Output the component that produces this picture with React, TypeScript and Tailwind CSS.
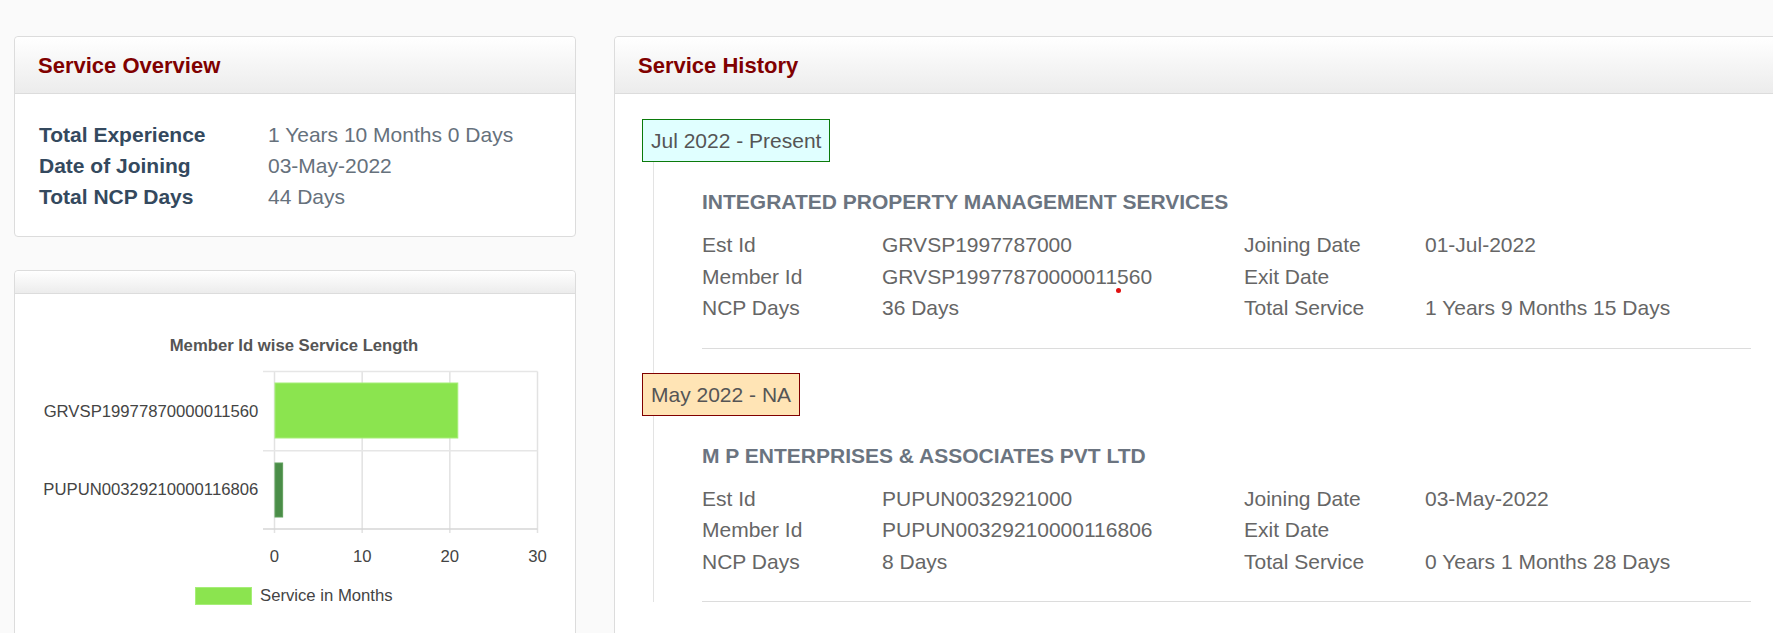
import React from "react"

type Detail = { label: string; value: string }

type HistoryItem = {
  period: string
  tone: "current" | "past"
  company: string
  left: Detail[]
  right: Detail[]
}

const overview: Detail[] = [
  { label: "Total Experience", value: "1 Years 10 Months 0 Days" },
  { label: "Date of Joining", value: "03-May-2022" },
  { label: "Total NCP Days", value: "44 Days" },
]

const history: HistoryItem[] = [
  {
    period: "Jul 2022 - Present",
    tone: "current",
    company: "INTEGRATED PROPERTY MANAGEMENT SERVICES",
    left: [
      { label: "Est Id", value: "GRVSP1997787000" },
      { label: "Member Id", value: "GRVSP19977870000011560" },
      { label: "NCP Days", value: "36 Days" },
    ],
    right: [
      { label: "Joining Date", value: "01-Jul-2022" },
      { label: "Exit Date", value: "" },
      { label: "Total Service", value: "1 Years 9 Months 15 Days" },
    ],
  },
  {
    period: "May 2022 - NA",
    tone: "past",
    company: "M P ENTERPRISES & ASSOCIATES PVT LTD",
    left: [
      { label: "Est Id", value: "PUPUN0032921000" },
      { label: "Member Id", value: "PUPUN00329210000116806" },
      { label: "NCP Days", value: "8 Days" },
    ],
    right: [
      { label: "Joining Date", value: "03-May-2022" },
      { label: "Exit Date", value: "" },
      { label: "Total Service", value: "0 Years 1 Months 28 Days" },
    ],
  },
]

// service length in months per member id
const chartData = [
  { id: "GRVSP19977870000011560", months: 20.85, color: "#8be44f", stroke: "#a6ee78" },
  { id: "PUPUN00329210000116806", months: 0.87, color: "#4a8d48", stroke: "#5f9f5c" },
]

function CardHeader({ title, short }: { title?: string; short?: boolean }) {
  return (
    <div
      className={
        "flex items-center border-b border-[#dcdcdc] bg-linear-to-b from-white to-[#ececec] pl-[23px] rounded-t-[4px] " +
        (short ? "h-[23px]" : "h-[57px]")
      }
    >
      {title && <h2 className="text-[22px] font-bold text-[#800000]">{title}</h2>}
    </div>
  )
}

function ServiceChart() {
  const left = 259.5
  const right = 522.5
  const top = 75.5
  const bottom = 233
  const scale = (right - left) / 30
  const ticks = [0, 10, 20, 30]
  const font = "'Liberation Sans', Arial, sans-serif"

  return (
    <svg width="560" height="380" className="mt-[2px] block">
      <text x="279" y="54.7" textAnchor="middle" fontFamily={font} fontSize="16.7" fontWeight="bold" fill="#555">
        Member Id wise Service Length
      </text>

      {ticks.map((t) => (
        <line
          key={t}
          x1={left + t * scale}
          x2={left + t * scale}
          y1={top}
          y2={bottom + 4}
          stroke="#e2e2e2"
          strokeWidth="1.5"
        />
      ))}
      <line x1={248} x2={right} y1={top} y2={top} stroke="#e6e6e6" strokeWidth="1.5" />
      <line x1={248} x2={right} y1={154.7} y2={154.7} stroke="#e6e6e6" strokeWidth="1.5" />
      <line x1={248} x2={right} y1={bottom} y2={bottom} stroke="#d6d6d6" strokeWidth="1.5" />

      <rect x={left + 0.5} y={87} width={chartData[0].months * scale} height={55} fill={chartData[0].color} stroke={chartData[0].stroke} />
      <rect x={left + 0.5} y={167} width={chartData[1].months * scale} height={54} fill={chartData[1].color} stroke={chartData[1].stroke} />

      <text x="243.3" y="120.7" textAnchor="end" fontFamily={font} fontSize="16.7" fill="#444">
        {chartData[0].id}
      </text>
      <text x="243.3" y="199.3" textAnchor="end" fontFamily={font} fontSize="16.7" fill="#444">
        {chartData[1].id}
      </text>

      {ticks.map((t) => (
        <text key={t} x={left + t * scale} y="265.7" textAnchor="middle" fontFamily={font} fontSize="16.7" fill="#444">
          {t}
        </text>
      ))}

      <rect x="180.5" y="291.5" width="56" height="17" fill="#8be44f" stroke="#a6ee78" />
      <text x="245" y="304.7" fontFamily={font} fontSize="16.7" fill="#444">
        Service in Months
      </text>
    </svg>
  )
}

function HistoryEntry({ item, last }: { item: HistoryItem; last: boolean }) {
  const badge =
    item.tone === "current"
      ? "border-[#0b7a0b] bg-[#e0ffff]"
      : "border-[#800000] bg-[#ffe4b5]"

  return (
    <div>
      <span className={"inline-block border px-[8px] py-[5px] text-[21px] leading-[31px] text-[#555] " + badge}>
        {item.period}
      </span>
      <div className={"ml-[11px] border-l border-[#e3e3e3] pl-[48px] pt-[24px] " + (last ? "" : "pb-[24px]")}>
        <div className="w-[1049px]">
          <h3 className="text-[21px] font-bold leading-[31px] text-[#6b7480]">{item.company}</h3>
          <div className="mt-[12px] grid grid-cols-[180px_362px_181px_1fr] text-[21px] leading-[31.5px] text-[#666]">
            {item.left.map((d, i) => (
              <React.Fragment key={d.label}>
                <span>{d.label}</span>
                <span>{d.value}</span>
                <span>{item.right[i].label}</span>
                <span>{item.right[i].value}</span>
              </React.Fragment>
            ))}
          </div>
          <div className="mt-[24px] border-t border-[#dcdcdc]" />
        </div>
      </div>
    </div>
  )
}

export default function App() {
  return (
    <div className="min-h-screen w-full overflow-hidden bg-[#fafafa] font-['Liberation_Sans',Arial,sans-serif]">
      <div className="flex items-start gap-[38px] pl-[14px] pt-[36px]">
        <div className="flex w-[562px] shrink-0 flex-col gap-[33px]">
          <div className="rounded-[4px] border border-[#dcdcdc] bg-white">
            <CardHeader title="Service Overview" />
            <div className="grid grid-cols-[229px_1fr] px-[24px] pb-[24px] pt-[25px] text-[21px] leading-[31px]">
              {overview.map((row) => (
                <React.Fragment key={row.label}>
                  <span className="font-bold text-[#34495e]">{row.label}</span>
                  <span className="text-[#66717c]">{row.value}</span>
                </React.Fragment>
              ))}
            </div>
          </div>

          <div className="rounded-[4px] border border-[#dcdcdc] bg-white">
            <CardHeader short />
            <ServiceChart />
          </div>
        </div>

        <div className="relative w-[1200px] shrink-0 rounded-[4px] border border-[#dcdcdc] bg-white pb-[80px]">
          <CardHeader title="Service History" />
          <div className="pl-[27px] pt-[25px]">
            {history.map((item, i) => (
              <HistoryEntry key={item.period} item={item} last={i === history.length - 1} />
            ))}
          </div>
          <span className="absolute left-[501px] top-[251px] h-[5px] w-[5px] rounded-full bg-[#e01010]" />
        </div>
      </div>
    </div>
  )
}
